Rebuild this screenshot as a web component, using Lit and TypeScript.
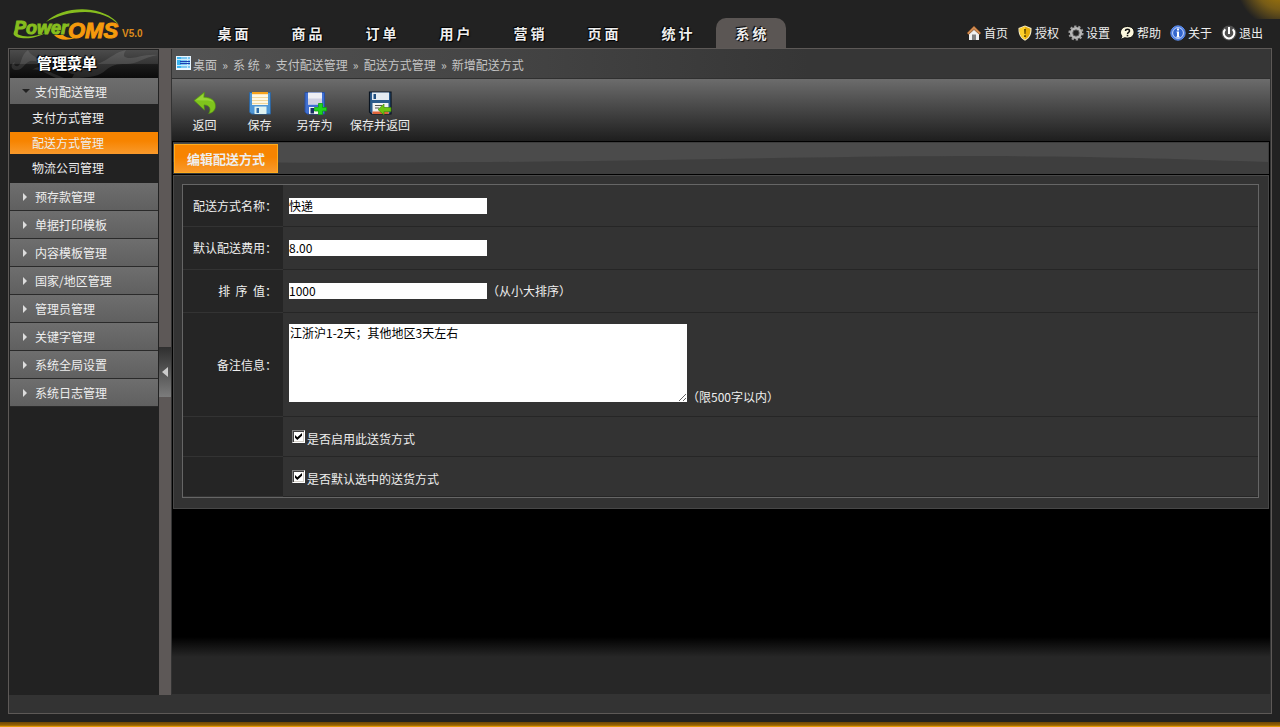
import { LitElement, html, css, svg } from "lit";
import { customElement, state } from "lit/decorators.js";
import { classMap } from "lit/directives/class-map.js";

const NAV = ["桌 面", "商 品", "订 单", "用 户", "营 销", "页 面", "统 计", "系 统"];

const GROUPS: { name: string; items: string[] }[] = [
  { name: "支付配送管理", items: ["支付方式管理", "配送方式管理", "物流公司管理"] },
  { name: "预存款管理", items: [] },
  { name: "单据打印模板", items: [] },
  { name: "内容模板管理", items: [] },
  { name: "国家/地区管理", items: [] },
  { name: "管理员管理", items: [] },
  { name: "关键字管理", items: [] },
  { name: "系统全局设置", items: [] },
  { name: "系统日志管理", items: [] },
];

const CRUMBS = ["桌面", "系 统", "支付配送管理", "配送方式管理", "新增配送方式"];

const icon16 = (body: unknown) =>
  html`<svg class="ic16" viewBox="0 0 16 16" aria-hidden="true">${body}</svg>`;

const LINKS = [
  {
    text: "首页",
    icon: icon16(svg`<path d="M3 8v7h10V8L8 3.500z" fill="#f0f0f0"/><path d="M6 9.500h4V15H6z" fill="#808080"/>
      <path d="M8 1 15 8l-1.500 1.500L8 4.500 2.500 9.500 1 8z" fill="#d08a50" stroke="#7d4a22" stroke-width=".7"/>`),
  },
  {
    text: "授权",
    icon: icon16(svg`<path d="M8 .5 14.500 3c.2 5.500-1 9.800-6.500 12.700C2.500 12.800 1.300 8.500 1.500 3z" fill="#f5ecc8"/>
      <path d="M8 1.600 13.400 3.700c.1 4.600-1 8.300-5.400 10.800C3.600 12 2.500 8.300 2.600 3.700z" fill="#e8ae08"/>
      <path d="M8 1.600v12.900C3.600 12 2.500 8.300 2.600 3.700z" fill="#fdd02c"/>
      <path d="M7 4h2l-.4 5H7.400zM7 10.300h2v1.800H7z" fill="#6b5200"/>`),
  },
  {
    text: "设置",
    icon: icon16(svg`<circle cx="8" cy="8" r="6.600" fill="none" stroke="#a0a0a0" stroke-width="2" stroke-dasharray="2.300 1.850"/>
      <circle cx="8" cy="8" r="4.700" fill="none" stroke="#b8b8b8" stroke-width="2.800"/>
      <circle cx="8" cy="8" r="3.200" fill="#222" stroke="#8a8a8a" stroke-width=".6"/>`),
  },
  {
    text: "帮助",
    icon: icon16(svg`<path d="M8.500 1.500c4.200 0 6.600 2.500 6.600 5.600s-2.400 6-6.600 6c-1 0-2-.1-2.700-.4L1.500 14.500 3 11C2 10 1.500 8.700 1.500 7.300c0-3.300 2.800-5.800 7-5.800z" fill="#fbf7dd" stroke="#0a0a0a" stroke-width="1"/>
      <path d="M6.500 6c0-2.300 4-2.300 4 0 0 1.300-2 1.300-2 2.900" fill="none" stroke="#111" stroke-width="1.500"/><path d="M7.700 9.800h1.600v1.500H7.700z" fill="#111"/>`),
  },
  {
    text: "关于",
    icon: icon16(svg`<circle cx="8" cy="8" r="7.200" fill="#4a7be0" stroke="#5f8fee" stroke-width="1"/>
      <circle cx="8" cy="8" r="5.400" fill="#3467cf" stroke="#c8d9ff" stroke-width="1"/>
      <path d="M7 3.500h2v2H7zM6.600 6.500H9V11.600h.8v1H6.300v-1H7v-4h-.4z" fill="#fff"/>`),
  },
  {
    text: "退出",
    icon: icon16(svg`<circle cx="8" cy="8" r="7.500" fill="#505050"/>
      <path d="M4.300 4.300a5.300 5.300 0 1 0 7.400 0" fill="none" stroke="#fff" stroke-width="2"/><path d="M7 2h2v7H7z" fill="#fff"/>`),
  },
];

const icon24 = (body: unknown) =>
  html`<svg class="ic24" viewBox="0 0 24 24" aria-hidden="true">${body}</svg>`;

const TOOLS = [
  {
    text: "返回",
    icon: icon24(svg`<path d="M1 9.500 11.500 1 11 6c7 .3 11.500 3.600 11.500 9 0 4-2.500 7-7 7.600 2.500-3 2.300-8.600-4.500-8.700l.6 5.300z" fill="#7fc41c" stroke="#4e8d10" stroke-width=".6"/>
      <path d="M2.500 9.300 10.500 3l-.3 4c5 0 8.800 1.600 10.800 4.500-3-2-6.500-2.300-11-2z" fill="#a6e04a" opacity=".6"/>`),
  },
  {
    text: "保存",
    icon: icon24(svg`<path d="M1.500 1.500h21v21.500H3.500l-2-2z" fill="#4f97d6" stroke="#2f669f" stroke-width="1"/>
      <path d="M4 2h16v12H4z" fill="#fdf7e2"/><path d="M4 1h16v2.200H4z" fill="#f6a21a"/>
      <path d="M4 6.500h16M4 9.500h16M4 12.500h16" stroke="#f0d79c" stroke-width="1"/>
      <path d="M6.500 15.500h12V23h-12z" fill="#dff3f2"/><path d="M8.500 17h2.500v5H8.500z" fill="#2c6aa8"/>`),
  },
  {
    text: "另存为",
    icon: icon24(svg`<path d="M2 1.500h19.500V23H4l-2-2z" fill="#3f6fd2" stroke="#2a4f9f" stroke-width="1"/>
      <path d="M5 1.500h14v12H5z" fill="#eeeef4"/><path d="M5 7.500h14v6H5z" fill="#cfd0e2"/>
      <path d="M6 16h11v7H6z" fill="#f5f5f5"/><path d="M7.500 17h3.500v5.500H7.500z" fill="#173066"/>
      <path d="M15.500 12.500h4v4h4v3.500h-4v3.700h-4V20h-4v-3.500h4z" fill="#1fd51f" stroke="#0fa00f" stroke-width=".8"/>`),
  },
  {
    text: "保存并返回",
    icon: icon24(svg`<path d="M1.500 1h21.500v22H3.500l-2-2z" fill="#2a5a8c" stroke="#0a1420" stroke-width="1.200"/>
      <path d="M4 1.500h17v7.500H4z" fill="#e4ebf1"/><path d="M5.500 3H8v5H5.500z" fill="#1f4f80"/>
      <path d="M4.500 12h16V23h-16z" fill="#f1f1f1"/><path d="M4.500 20.500h16V23h-16z" fill="#e0653a"/>
      <path d="M7 14.500h7M7 17h4" stroke="#555" stroke-width="1"/>
      <path d="M10 18.500 16 13v3.500h7v4h-7V24z" fill="#6cc411" stroke="#3f8a0a" stroke-width=".7"/>`),
  },
];

@customElement("app-root")
export class AppRoot extends LitElement {
  @state() private openGroup = 0;
  @state() private activeItem = "配送方式管理";

  static styles = css`
    :host {
      display: flex;
      flex-direction: column;
      min-height: 100vh;
      box-sizing: border-box;
      background: #222;
      border-bottom: 1px solid #e39a08;
      color: #eee;
      font: 12px/18px "Noto Sans CJK SC", sans-serif;
    }
    *, *::before { box-sizing: border-box; }
    a { color: inherit; text-decoration: none; }
    button {
      font: inherit;
      color: inherit;
      border: 0;
      margin: 0;
      padding: 0;
      background: none;
      cursor: pointer;
    }
    svg { display: block; flex: none; }

    .top {
      display: flex;
      height: 48px;
      align-items: flex-end;
      padding: 0 17px 0 8px;
      background: radial-gradient(circle 46px at calc(100% + 2px) -18px, #a67a08 20%, rgba(140, 106, 20, 0.8) 60%, transparent 100%) top right / 60px 19px no-repeat;
    }
    .logo { width: 190px; height: 48px; }
    .nav { display: flex; gap: 4px; flex: 1; }
    .nav a {
      width: 70px;
      height: 30px;
      border-radius: 10px 10px 0 0;
      text-align: center;
      font-size: 14px;
      line-height: 31px;
      font-weight: bold;
      text-shadow: 1px 1px 1px #000, -1px -1px 1px #000;
    }
    .nav .on { background: #5b5654; }
    .links { display: flex; gap: 9px; height: 30px; align-items: center; }
    .links a { display: flex; gap: 2px; align-items: center; }
    .ic16 { width: 16px; height: 16px; }
    .ic24 { width: 24px; height: 24px; }

    .frame {
      flex: 1;
      display: flex;
      margin: 0 8px 8px;
      border: 1px solid #5d5957;
      padding: 0 1px 18px 0;
      background: #333;
    }
    .side { width: 150px; padding: 1px 1px 0; background: #222; flex: none; }
    .side h2 {
      position: relative;
      display: flex;
      margin: 0;
      height: 28px;
      padding-left: 27px;
      align-items: center;
      font-size: 15px;
      line-height: 20px;
      color: #fff;
      text-shadow: 1px 1px 1px #000, -1px -1px 1px #000;
      background: linear-gradient(#4b4b4b, #363636 48%, #1b1b1b 52%, #0b0b0b);
    }
    .side h2 span { position: relative; padding-bottom: 2px; }
    .leaf { position: absolute; inset: 0; width: 100%; height: 100%; }
    .group {
      display: flex;
      width: 100%;
      height: 28px;
      align-items: center;
      padding: 0 0 0 12px;
      gap: 5px;
      border-bottom: 1px solid #2a2a2a;
      background: linear-gradient(#6e6e6e, #606060);
      text-align: left;
    }
    .group.open { height: 26px; border: 0; padding-top: 2px; }
    .group svg { width: 8px; height: 8px; }
    .sub { list-style: none; margin: 0; padding: 3px 0 4px; display: grid; gap: 3px; }
    .sub a { display: block; padding-left: 22px; line-height: 22px; }
    .sub .on { background: linear-gradient(#f78400 40%, #f99a2c); }

    .split {
      width: 12px;
      flex: none;
      margin-right: 1px;
      background: #5d5857;
      display: flex;
      align-items: center;
    }
    .split button {
      width: 12px;
      height: 50px;
      display: grid;
      place-items: center;
      background: linear-gradient(#2f2f2f, #7c7c7c);
    }

    .main {
      flex: 1;
      min-width: 0;
      margin-bottom: 1px;
      background: linear-gradient(to top, #272727 37px, #000 57px);
    }
    .crumbs {
      display: flex;
      align-items: center;
      height: 30px;
      padding: 2px 4px 0;
      border-bottom: 1px solid #303030;
      background: linear-gradient(to right, #535353, #363636 58%);
      color: #c4c4c4;
    }
    .crumbs svg { margin: 0 2px 3px 0; }
    .crumbs i { font-style: normal; width: 16px; text-align: center; }
    .tools {
      display: flex;
      height: 62px;
      padding: 12px 5px 0;
      background: linear-gradient(#6c6c6c, #1e1e1e);
    }
    .tools button {
      display: flex;
      flex-direction: column;
      align-items: center;
      min-width: 55px;
      padding: 0 8px;
      gap: 1px;
    }
    .body { padding: 1px 1px 0; }
    .tabs {
      position: relative;
      height: 32px;
      padding: 1px 0 0;
      border: 1px solid #3d3d3d;
      border-left: 0;
      background: #4b4b4b;
      overflow: hidden;
    }
    .wave { position: absolute; inset: 0; width: 100%; height: 100%; }
    .tabs button {
      position: relative;
      margin-left: 1px;
      height: 29px;
      padding: 0 12px;
      border: 1px solid #ffac1c;
      background: linear-gradient(#f78400 45%, #f99a2c);
      font-weight: bold;
      font-size: 13px;
    }
    .panel {
      margin-top: 1px;
      padding: 8px 9px 10px 8px;
      border: 1px solid #484848;
      background: #333;
    }
    table { width: 100%; border: 1px solid #666; border-spacing: 0; }
    th, td { padding: 0 6px; height: 43px; border-bottom: 1px solid #262626; }
    tr:first-child > * { height: 42px; }
    th {
      width: 100px;
      text-align: right;
      font-weight: normal;
      background: #252525;
      border-color: #333;
      white-space: nowrap;
    }
    .tall > * { height: 104px; }
    .low > * { height: 40px; }
    .line { display: flex; align-items: center; }
    .tall .line { align-items: flex-end; }
    .text, textarea {
      border: 0;
      margin: 0;
      border-radius: 0;
      background: #fff;
      color: #000;
      font: inherit;
      outline: 0;
    }
    .text { width: 198px; height: 16px; padding: 0; line-height: 16px; }
    textarea { width: 398px; height: 78px; padding: 1px; line-height: 16px; }
    .tall textarea { margin-bottom: 4px; }
    .low .line { padding: 4px 3px 0; gap: 2px; }
    .check {
      appearance: none;
      width: 13px;
      height: 13px;
      margin: 0 0 4px;
      background: #fff;
      border: 1px solid #fff;
      border-top-color: #808080;
      border-left-color: #808080;
      box-shadow: inset 1px 1px #404040, inset -1px -1px #d4d0c8;
    }
    .check:checked::before {
      content: "";
      display: block;
      width: 7px;
      height: 7px;
      margin: 2px;
      background: #000;
      clip-path: polygon(0 28%, 33% 62%, 100% 0, 100% 40%, 33% 100%, 0 68%);
    }
    .gold { height: 4px; background: linear-gradient(#6d4604, #8a5a04 60%, #b07405); }
  `;

  private renderLogo() {
    return html`<svg class="logo" viewBox="0 0 190 48" role="img" aria-label="PowerOMS V5.0">
      <path d="M38 22C50 10 74 6 92 12c9 3 15 7 19 13-8-8-20-13-34-13-15 0-28 4-39 10z" fill="#86bd1e" />
      <path d="M9 29c-5 3-5 8 4 9 9 1 18-1 24-5-8 3-16 4-22 3-5-1-8-3-6-7z" fill="#86bd1e" />
      <path d="M46 35h9c2 2 5 3 9 3h3c-8 3-17 2-21-3z" fill="#f59a0c" />
      <text x="60" y="38" font-family="Liberation Sans, sans-serif" font-size="22" font-weight="bold" font-style="italic"
        fill="#f59a0c" stroke="#f59a0c">OMS</text>
      <text x="6" y="34" font-family="Liberation Sans, sans-serif" font-size="18" font-weight="bold" font-style="italic"
        fill="#86bd1e" stroke="#86bd1e">Power</text>
      <text x="114" y="37" font-family="Liberation Sans, sans-serif" font-size="10" font-weight="bold" fill="#dc8a1c">V5.0</text>
    </svg>`;
  }

  private renderGroup(g: { name: string; items: string[] }, i: number) {
    const open = this.openGroup === i && g.items.length > 0;
    return html`
      <button class=${classMap({ group: true, open })} aria-expanded=${open ? "true" : "false"}
        @click=${() => (this.openGroup = open ? -1 : i)}>
        <svg viewBox="0 0 8 8">
          ${open ? svg`<path d="M0 1h8L4 5z" fill="#222"/>` : svg`<path d="M1 0v8l4-4z" fill="#ddd"/>`}
        </svg>
        <span>${g.name}</span>
      </button>
      ${open
        ? html`<ul class="sub">
            ${g.items.map(
              (t) => html`<li><a href="#" class=${classMap({ on: t === this.activeItem })}
                @click=${(e: Event) => { e.preventDefault(); this.activeItem = t; }}>${t}</a></li>`
            )}
          </ul>`
        : ""}
    `;
  }

  render() {
    return html`
      <header class="top">
        ${this.renderLogo()}
        <nav class="nav">
          ${NAV.map((n, i) => html`<a href="#" class=${classMap({ on: i === NAV.length - 1 })}>${n}</a>`)}
        </nav>
        <div class="links">
          ${LINKS.map((l) => html`<a href="#">${l.icon}<span>${l.text}</span></a>`)}
        </div>
      </header>
      <div class="frame">
        <aside class="side">
          <h2>
            <svg class="leaf" viewBox="0 0 148 28" aria-hidden="true">
              <g fill="#fff" opacity=".1">
                <path d="M18 0C10 6 12 14 8 16c-3 1-5-2-3-4-4 1-5 7 0 8 8 1 9-7 15-9 8-2 14 6 22 12l12 5h-8C36 24 30 18 22 20c12-8 30 0 40 4l20 2c-20-8-40-6-52-16-4-3-10-5-12-10z" />
                <path d="M62 28c6-12 18-10 30-16 10-5 14-10 24-12-4 6-2 8 4 8 8 0 14-4 28-3-14 2-20 9-32 9-10 0-14 1-20 6-6 6-16 8-34 8z" />
              </g>
            </svg>
            <span>管理菜单</span>
          </h2>
          ${GROUPS.map((g, i) => this.renderGroup(g, i))}
        </aside>
        <div class="split">
          <button aria-label="收起菜单">
            <svg width="6" height="10" viewBox="0 0 6 10"><path d="M6 0v10L0 5z" fill="#ccc" /></svg>
          </button>
        </div>
        <main class="main">
          <nav class="crumbs">
            <svg width="15" height="14" viewBox="0 0 15 14" aria-hidden="true">
              <path d="M0 0h15v14H0z" fill="#e9f6ff" />
              <path d="M1 1h13v11H1z" fill="#7cc8f2" />
              <path d="M1 1h4v11H1z" fill="#3bb4f0" />
              <path d="M1 3.500h13M1 9.500h13M11.500 1v11" stroke="#cdeafa" />
              <path d="M4 5.500h10M4 7.500h10" stroke="#1c3fb4" />
            </svg>
            ${CRUMBS.map((c, i) => html`${i ? html`<i>»</i>` : ""}<a href="#">${c}</a>`)}
          </nav>
          <div class="tools">
            ${TOOLS.map((t) => html`<button>${t.icon}<span>${t.text}</span></button>`)}
          </div>
          <div class="body">
            <div class="tabs">
              <svg class="wave" viewBox="0 0 1000 30" preserveAspectRatio="none" aria-hidden="true">
                <path d="M0 19C350 22 500 14 720 13c120 0 200 3 280 6v11H0z" fill="#3e3e3e" />
              </svg>
              <button>编辑配送方式</button>
            </div>
            <form class="panel">
              <table>
                <tr>
                  <th><label for="name">配送方式名称：</label></th>
                  <td><div class="line"><input class="text" id="name" type="text" value="快递" /></div></td>
                </tr>
                <tr>
                  <th><label for="fee">默认配送费用：</label></th>
                  <td><div class="line"><input class="text" id="fee" type="text" value="8.00" /></div></td>
                </tr>
                <tr>
                  <th><label for="sort">排&nbsp; 序&nbsp; 值：</label></th>
                  <td><div class="line"><input class="text" id="sort" type="text" value="1000" /><span>（从小大排序）</span></div></td>
                </tr>
                <tr class="tall">
                  <th><label for="memo">备注信息：</label></th>
                  <td><div class="line"><textarea id="memo" .value=${"江浙沪1-2天；其他地区3天左右"}></textarea><span>（限500字以内）</span></div></td>
                </tr>
                <tr class="low">
                  <th></th>
                  <td><div class="line"><input class="check" id="enabled" type="checkbox" checked /><label for="enabled">是否启用此送货方式</label></div></td>
                </tr>
                <tr class="low">
                  <th></th>
                  <td><div class="line"><input class="check" id="preset" type="checkbox" checked /><label for="preset">是否默认选中的送货方式</label></div></td>
                </tr>
              </table>
            </form>
          </div>
        </main>
      </div>
      <div class="gold"></div>
    `;
  }
}
